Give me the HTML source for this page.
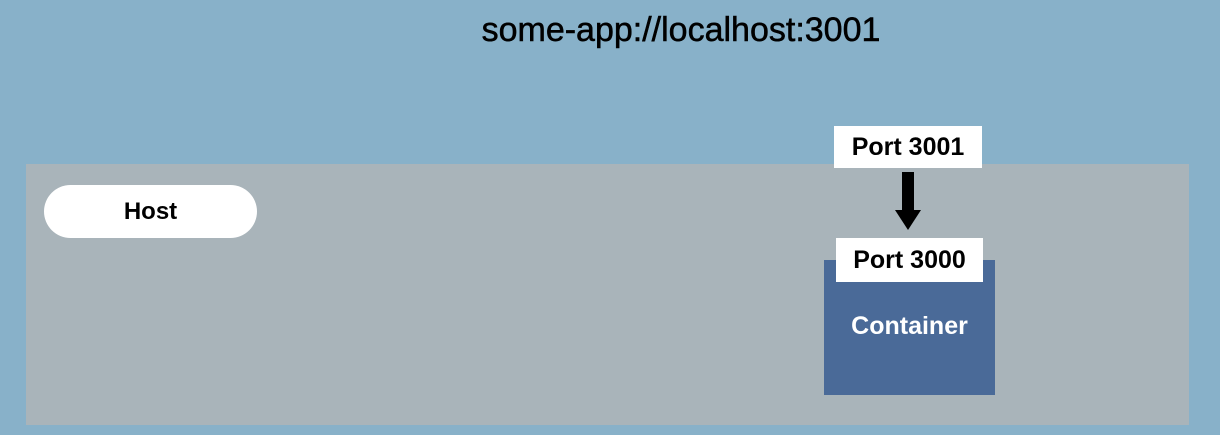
<!DOCTYPE html>
<html><head><style>
body{margin:0;width:1220px;height:435px;background:#88b1c9;position:relative;overflow:hidden;font-family:"Liberation Sans",sans-serif}
.a{position:absolute}
.b{font-weight:bold;display:flex;align-items:center;justify-content:center}
</style></head><body>
<div class="a" style="left:0;top:11px;width:1362px;text-align:center;font-size:34px;color:#000;-webkit-text-stroke:0.5px #000">some-app://localhost:3001</div>
<div class="a" style="left:26px;top:164px;width:1163px;height:261px;background:#a9b4ba"></div>
<div class="a b" style="left:44px;top:185px;width:213px;height:53px;background:#fff;border-radius:27px;font-size:24px">Host</div>
<div class="a" style="left:824px;top:260px;width:171px;height:135px;background:#4a6a98"></div>
<div class="a b" style="left:824px;top:305px;width:171px;height:42px;color:#fff;font-size:25px">Container</div>
<div class="a b" style="left:834px;top:126px;width:148px;height:42px;background:#fff;font-size:25px">Port 3001</div>
<div class="a b" style="left:836px;top:238px;width:147px;height:44px;background:#fff;font-size:25px">Port 3000</div>
<svg class="a" style="left:890px;top:170px" width="40" height="62"><rect x="12" y="2" width="12" height="44" fill="#000"/><polygon points="5,40 31,40 18,60" fill="#000"/></svg>
</body></html>
